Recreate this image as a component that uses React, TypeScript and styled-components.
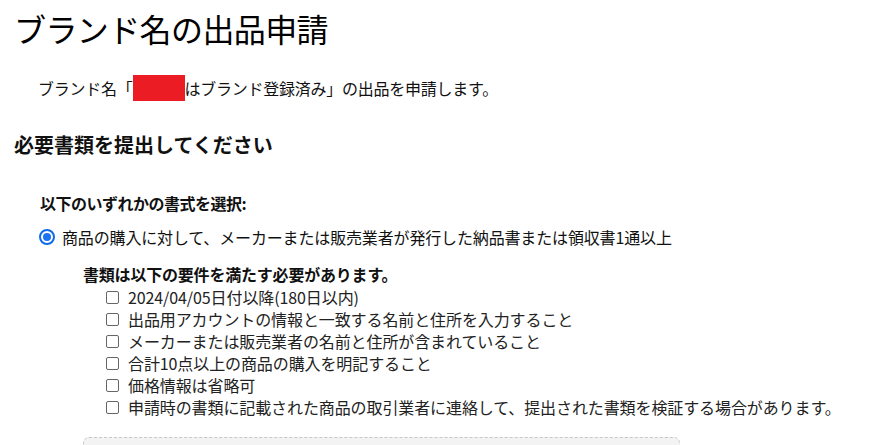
import React from "react";
import styled, { createGlobalStyle } from "styled-components";

const Global = createGlobalStyle`
  html, body { margin: 0; padding: 0; background: #fff; }
  body {
    font-family: "Noto Sans CJK JP", "Noto Sans", sans-serif;
    color: #111;
    overflow: hidden;
  }
`;

const Page = styled.div`
  padding: 8px 0 0 14px;
`;

const Title = styled.h1`
  margin: 0;
  font-size: 32px;
  font-weight: 400;
  line-height: 40px;
  color: #000;
  letter-spacing: -0.6px;
`;

const Intro = styled.p`
  margin: 27px 0 0 24px;
  font-size: 16px;
  line-height: 26px;
  display: flex;
  align-items: center;
  letter-spacing: -0.25px;
`;

const Redact = styled.span`
  display: inline-block;
  width: 52px;
  height: 26px;
  background: #ec1c24;
  margin: 0;
`;

const SectionHeading = styled.h2`
  margin: 30px 0 0;
  font-size: 20px;
  font-weight: 700;
  line-height: 28px;
  color: #111;
`;

const Section = styled.div`
  margin: 32px 0 0 26px;
`;

const Label = styled.div`
  font-size: 16px;
  font-weight: 700;
  line-height: 24px;
  letter-spacing: -0.5px;
`;

const RadioRow = styled.label`
  margin-top: 10px;
  display: flex;
  align-items: center;
  gap: 7px;
  font-size: 16px;
  line-height: 24px;
  letter-spacing: -0.15px;
`;

const Radio = styled.span`
  width: 12px;
  height: 12px;
  border-radius: 50%;
  border: 2px solid #0f6ae8;
  display: flex;
  align-items: center;
  justify-content: center;
  margin-left: -1px;
  &::after {
    content: "";
    width: 8px;
    height: 8px;
    border-radius: 50%;
    background: #1a73f0;
  }
`;

const Requirements = styled.div`
  margin: 13px 0 0 43px;
`;

const ReqHeading = styled.div`
  font-size: 16px;
  font-weight: 700;
  line-height: 24px;
  letter-spacing: -0.2px;
`;

const List = styled.ul`
  list-style: none;
  margin: 0;
  padding: 0 0 0 24px;
`;

const Item = styled.li`
  display: flex;
  align-items: center;
  gap: 9px;
  font-size: 16px;
  line-height: 22px;
  color: #222;
  letter-spacing: -0.1px;
`;

const Box = styled.span`
  flex: none;
  width: 11px;
  height: 11px;
  border: 1px solid #666;
  border-radius: 2px;
  margin-left: -1px;
`;

const Upload = styled.div`
  margin-top: 19px;
  width: 595px;
  height: 60px;
  background: #f3f3f3;
  border: 1px dashed #c8c8c8;
  border-radius: 6px 6px 0 0;
`;

const items = [
  "2024/04/05日付以降(180日以内)",
  "出品用アカウントの情報と一致する名前と住所を入力すること",
  "メーカーまたは販売業者の名前と住所が含まれていること",
  "合計10点以上の商品の購入を明記すること",
  "価格情報は省略可",
  "申請時の書類に記載された商品の取引業者に連絡して、提出された書類を検証する場合があります。",
];

export default function App() {
  return (
    <>
      <Global />
      <Page>
        <Title>ブランド名の出品申請</Title>
        <Intro>
          ブランド名「<Redact />はブランド登録済み」の出品を申請します。
        </Intro>
        <SectionHeading>必要書類を提出してください</SectionHeading>
        <Section>
          <Label>以下のいずれかの書式を選択:</Label>
          <RadioRow>
            <Radio />
            商品の購入に対して、メーカーまたは販売業者が発行した納品書または領収書1通以上
          </RadioRow>
          <Requirements>
            <ReqHeading>書類は以下の要件を満たす必要があります。</ReqHeading>
            <List>
              {items.map((t) => (
                <Item key={t}>
                  <Box />
                  {t}
                </Item>
              ))}
            </List>
            <Upload />
          </Requirements>
        </Section>
      </Page>
    </>
  );
}
